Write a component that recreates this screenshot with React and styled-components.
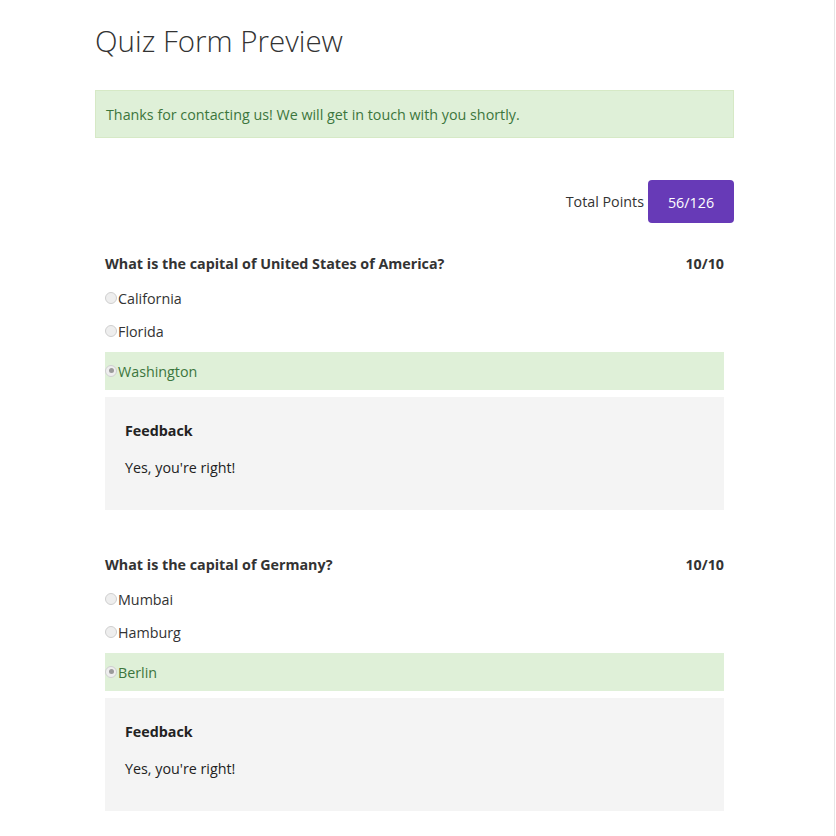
import React from 'react';
import styled, { createGlobalStyle } from 'styled-components';

const GlobalStyle = createGlobalStyle`
  html, body {
    margin: 0;
    padding: 0;
    background: #fff;
  }
  body {
    font-family: 'Open Sans', 'Liberation Sans', sans-serif;
    font-size: 14.3px;
    color: #333;
  }
`;

const Page = styled.div`
  width: 835px;
  min-height: 836px;
  border-right: 1px solid #e6e6e6;
  box-sizing: border-box;
`;

const Container = styled.div`
  width: 639px;
  margin-left: 95px;
  padding-top: 20px;
`;

const Title = styled.h1`
  font-size: 29.5px;
  font-weight: 300;
  color: #333;
  margin: 0 0 28px;
  line-height: 42px;
`;

const Alert = styled.div`
  background-color: #dff0d8;
  border: 1px solid #d6e9c6;
  color: #3c763d;
  padding: 15px 10px 13px;
  line-height: 18px;
`;

const TotalRow = styled.div`
  display: flex;
  justify-content: flex-end;
  align-items: center;
  gap: 4px;
  margin-top: 42px;
`;

const PointsBadge = styled.div`
  background-color: #673ab7;
  color: #fff;
  border-radius: 4px;
  height: 43px;
  width: 86px;
  padding-top: 1px;
  box-sizing: border-box;
  display: flex;
  align-items: center;
  justify-content: center;
`;

const Question = styled.div`
  padding: 0 10px;
  margin-top: ${(p) => p.$top}px;
`;

const QuestionHead = styled.div`
  display: flex;
  justify-content: space-between;
  font-weight: 700;
  line-height: 20px;
  padding-top: 1px;
  margin-bottom: 15px;
`;

const Options = styled.div`
  display: flex;
  flex-direction: column;
  gap: 13px;
`;

const Option = styled.div`
  display: flex;
  align-items: center;
  line-height: 20px;
  height: ${(p) => (p.$correct ? 38 : 20)}px;
  padding-top: ${(p) => (p.$correct ? 1 : 0)}px;
  box-sizing: border-box;
  margin-top: ${(p) => (p.$correct ? -3 : 0)}px;
  background-color: ${(p) => (p.$correct ? '#dff0d8' : 'transparent')};
  color: ${(p) => (p.$correct ? '#3c763d' : '#333')};
`;

const Radio = styled.span`
  width: 12px;
  height: 12px;
  border-radius: 50%;
  border: 1px solid #cfcfcf;
  background: #eee;
  box-sizing: border-box;
  display: inline-flex;
  align-items: center;
  justify-content: center;
  margin: -2px 1px 0 0;

  &::after {
    content: '';
    width: 5px;
    height: 5px;
    border-radius: 50%;
    background: ${(p) => (p.$checked ? '#9a9a9a' : 'transparent')};
  }
`;

const Feedback = styled.div`
  background-color: #f4f4f4;
  margin-top: 7px;
  padding: 24px 20px 32px;
  color: #222;
`;

const FeedbackTitle = styled.div`
  font-weight: 700;
  line-height: 20px;
  margin-bottom: 17px;
`;

const FeedbackText = styled.div`
  line-height: 20px;
`;

const questions = [
  {
    text: 'What is the capital of United States of America?',
    score: '10/10',
    options: ['California', 'Florida', 'Washington'],
    answer: 'Washington',
    feedback: "Yes, you're right!",
  },
  {
    text: 'What is the capital of Germany?',
    score: '10/10',
    options: ['Mumbai', 'Hamburg', 'Berlin'],
    answer: 'Berlin',
    feedback: "Yes, you're right!",
  },
];

const App = () => {
  return (
    <Page>
      <GlobalStyle />
      <Container>
        <Title>Quiz Form Preview</Title>
        <Alert>Thanks for contacting us! We will get in touch with you shortly.</Alert>
        <TotalRow>
          <span>Total Points</span>
          <PointsBadge>56/126</PointsBadge>
        </TotalRow>
        {questions.map((q, i) => (
          <Question key={q.text} $top={i === 0 ? 30 : 44}>
            <QuestionHead>
              <span>{q.text}</span>
              <span>{q.score}</span>
            </QuestionHead>
            <Options>
              {q.options.map((opt) => (
                <Option key={opt} $correct={opt === q.answer}>
                  <Radio $checked={opt === q.answer} />
                  {opt}
                </Option>
              ))}
            </Options>
            <Feedback>
              <FeedbackTitle>Feedback</FeedbackTitle>
              <FeedbackText>{q.feedback}</FeedbackText>
            </Feedback>
          </Question>
        ))}
      </Container>
    </Page>
  );
};

export default App;
